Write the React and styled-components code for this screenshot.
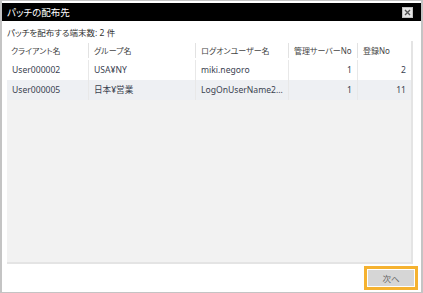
import styled, { createGlobalStyle } from "styled-components";

const GlobalStyle = createGlobalStyle`
    html, body {
        margin: 0;
        padding: 0;
        background: #ffffff;
    }
    body {
        font-family: "Noto Sans", "Noto Sans CJK JP", sans-serif;
        font-feature-settings: "palt";
    }
`

const columns = [
    { key: "client", label: "クライアント名", width: 81 },
    { key: "group", label: "グループ名", width: 107 },
    { key: "user", label: "ログオンユーザー名", width: 93 },
    { key: "server", label: "管理サーバーNo", width: 69, right: true },
    { key: "reg", label: "登録No", width: 54, right: true },
]

const rows = [
    { client: "User000002", group: "USA¥NY", user: "miki.negoro", server: "1", reg: "2" },
    { client: "User000005", group: "日本¥営業", user: "LogOnUserName27…", server: "1", reg: "11" },
]

const App = () => {
    return (
        <>
            <GlobalStyle />
            <Dialog>
                <TitleBar>
                    <Title>パッチの配布先</Title>
                    <CloseButton aria-label="close">
                        <svg width="7" height="7" viewBox="0 0 7 7">
                            <path d="M1 1L6 6M6 1L1 6" stroke="#555" strokeWidth="1.4" />
                        </svg>
                    </CloseButton>
                </TitleBar>
                <Body>
                    <Summary>パッチを配布する端末数: 2 件</Summary>
                    <Table>
                        <HeaderRow>
                            {columns.map((c, i) => (
                                <HeadCell key={c.key} $w={c.width} $first={i === 0}>
                                    {c.label}
                                </HeadCell>
                            ))}
                        </HeaderRow>
                        {rows.map((r, ri) => (
                            <Row key={r.client} $alt={ri % 2 === 1}>
                                {columns.map((c, i) => (
                                    <Cell key={c.key} $w={c.width} $right={c.right} $first={i === 0}>
                                        {r[c.key]}
                                    </Cell>
                                ))}
                            </Row>
                        ))}
                    </Table>
                </Body>
                <Footer>
                    <Focus>
                        <NextButton>次へ</NextButton>
                    </Focus>
                </Footer>
            </Dialog>
        </>
    );
}

export default App;


const Dialog = styled.div`
    box-sizing: border-box;
    width: 423px;
    height: 293px;
    border: 1px solid #c4c4c4;
    border-left-width: 2px;
    border-right-width: 2px;
    padding-top: 1px;
    display: flex;
    flex-direction: column;
    background: #fff;
`

const TitleBar = styled.div`
    height: 19px;
    margin-top: 1px;
    background: #000;
    display: flex;
    align-items: center;
    justify-content: space-between;
    padding: 0 8px 0 5px;
`

const Title = styled.span`
    color: #fff;
    font-size: 9.5px;
`

const CloseButton = styled.div`
    box-sizing: border-box;
    width: 11px;
    height: 11px;
    background: #e4e4e4;
    border: 1px solid #c0c0c0;
    display: flex;
    align-items: center;
    justify-content: center;
`

const Body = styled.div`
    flex: 1;
    display: flex;
    flex-direction: column;
    padding: 5px 8px 0 5px;
`

const Summary = styled.div`
    font-size: 8.5px;
    color: #333;
    height: 13px;
    line-height: 13px;
    margin-bottom: 2px;
`

const Table = styled.div`
    box-sizing: border-box;
    height: 223px;
    background: #f2f2f2;
    border-right: 2px solid #e4e4e4;
    border-bottom: 2px solid #e4e4e4;
    display: flex;
    flex-direction: column;
`

const HeaderRow = styled.div`
    display: flex;
    height: 19px;
    background: #fff;
    align-items: center;
`

const HeadCell = styled.div`
    box-sizing: border-box;
    width: ${p => p.$w}px;
    height: 15px;
    line-height: 15px;
    font-size: 8px;
    color: #444;
    padding-left: ${p => (p.$first ? 4 : 5)}px;
    border-left: ${p => (p.$first ? "none" : "1px solid #e2e2e2")};
    white-space: nowrap;
    overflow: hidden;
`

const Row = styled.div`
    display: flex;
    height: 20px;
    background: ${p => (p.$alt ? "#eef0f3" : "#fff")};
`

const Cell = styled.div`
    box-sizing: border-box;
    width: ${p => p.$w}px;
    line-height: 20px;
    font-size: 8.6px;
    color: #3a4250;
    padding: ${p => (p.$right ? "0 5px" : "0 1px 0 5px")};
    text-align: ${p => (p.$right ? "right" : "left")};
    border-left: ${p => (p.$first ? "none" : "1px solid #e8e8e8")};
    white-space: nowrap;
    overflow: hidden;
    text-overflow: ellipsis;
`

const Footer = styled.div`
    display: flex;
    justify-content: flex-end;
    padding: 0 3px 1px 0;
    height: 28px;
    align-items: center;
`

const Focus = styled.div`
    border: 3px solid #f5b230;
    padding: 1px;
    display: flex;
`

const NextButton = styled.button`
    width: 46px;
    height: 16px;
    border: none;
    background: #d6d6d6;
    color: #666;
    font-family: "Noto Sans CJK JP", sans-serif;
    font-feature-settings: "palt";
    font-size: 8.5px;
    padding: 0;
`
